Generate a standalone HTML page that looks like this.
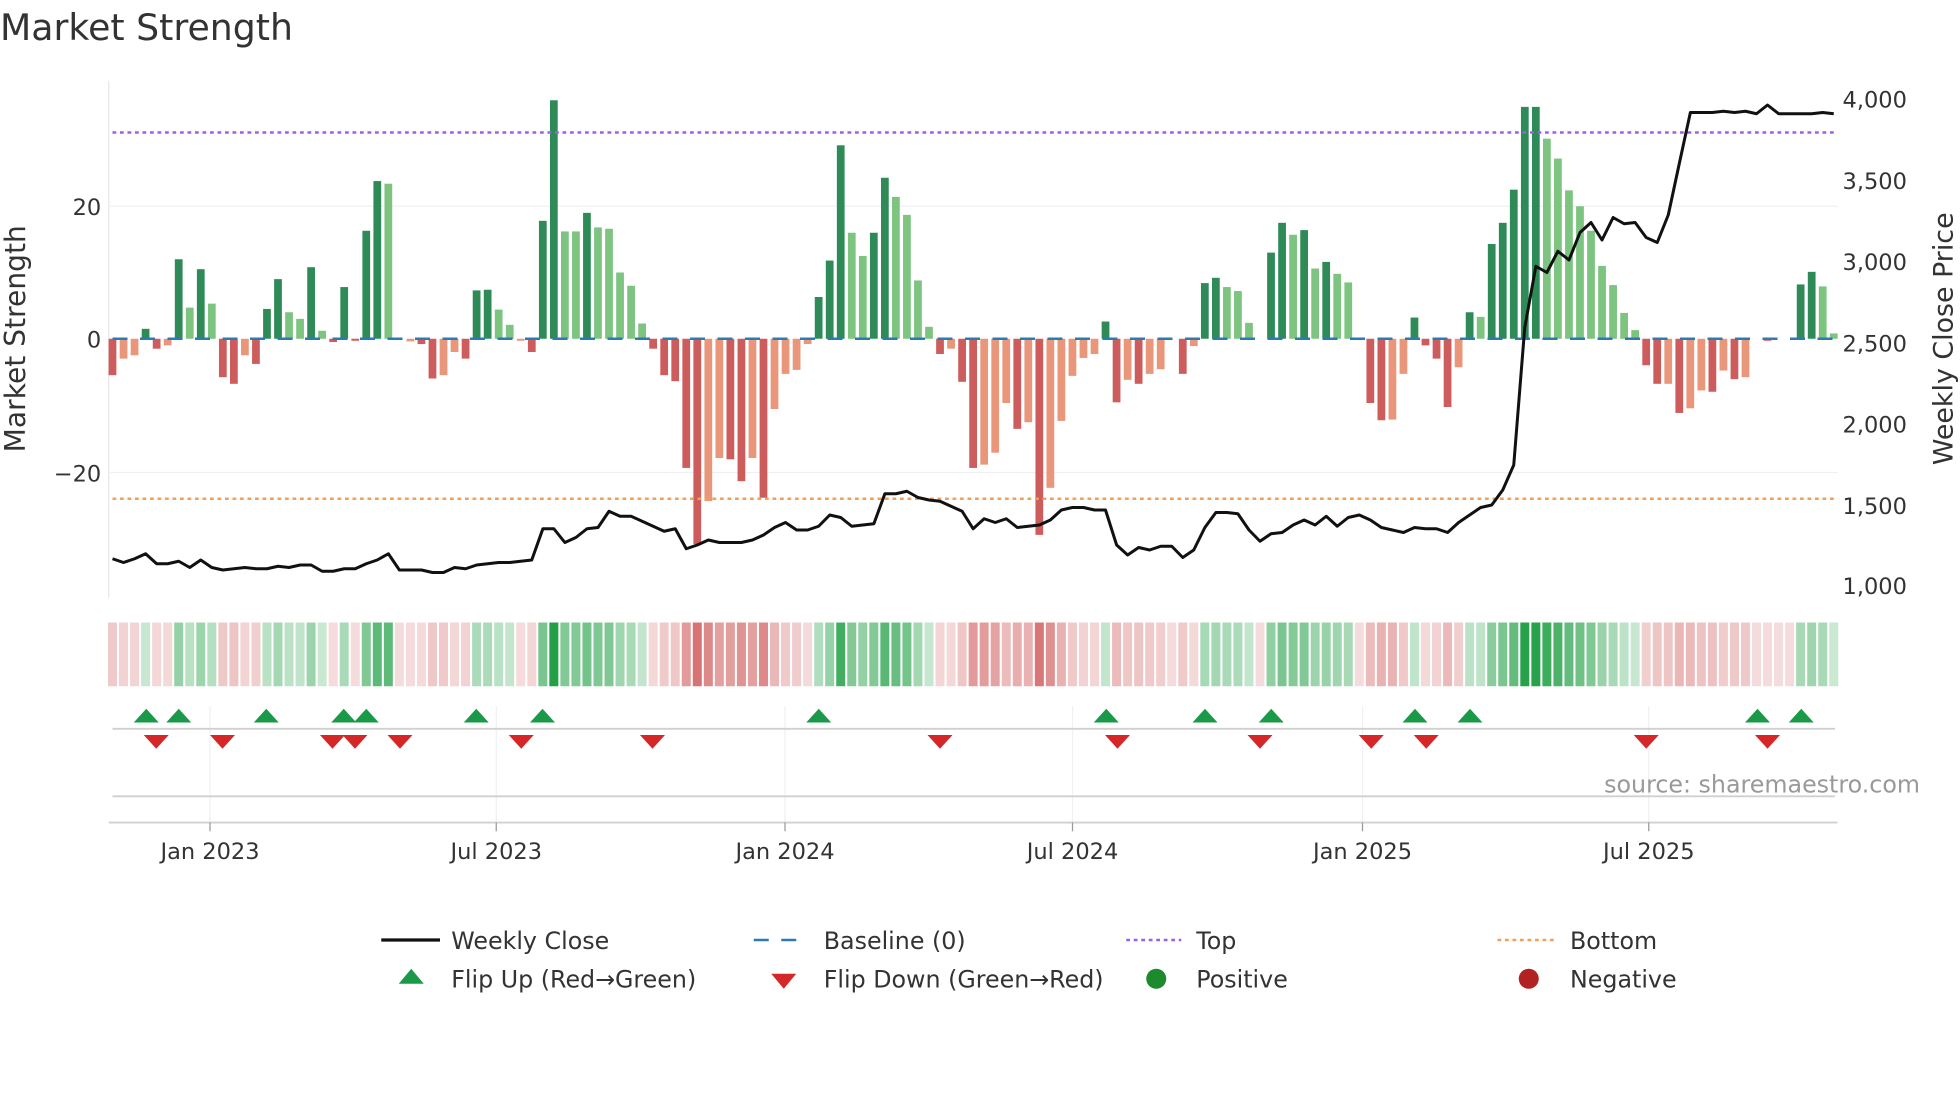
<!DOCTYPE html>
<html><head><meta charset="utf-8">
<style>
html,body{margin:0;padding:0;background:#fff;}
svg{display:block;font-family:"DejaVu Sans","Liberation Sans",sans-serif;}
</style></head>
<body>
<svg id="c" width="1960" height="1102" viewBox="0 0 1568 881.6" xmlns="http://www.w3.org/2000/svg">
<rect width="1568" height="882" fill="#fff"/>
<text x="0" y="32" font-size="29" fill="#333">Market Strength</text>
<line x1="87" y1="65" x2="87" y2="478" stroke="#e6e6e6" stroke-width="1"/>
<line x1="88" y1="165" x2="1470" y2="165" stroke="#eef0f4" stroke-width="1"/>
<line x1="88" y1="378" x2="1470" y2="378" stroke="#eef0f4" stroke-width="1"/>
<text x="81" y="172" font-size="18" fill="#333" text-anchor="end">20</text>
<text x="81" y="278" font-size="18" fill="#333" text-anchor="end">0</text>
<text x="81" y="385" font-size="18" fill="#333" text-anchor="end">−20</text>
<text transform="translate(20,271) rotate(-90)" font-size="22.5" fill="#333" text-anchor="middle">Market Strength</text>
<text transform="translate(1562,271) rotate(-90)" font-size="21.5" fill="#333" text-anchor="middle">Weekly Close Price</text>
<g font-size="18" fill="#333">
<text x="1474" y="86">4,000</text><text x="1474" y="151">3,500</text><text x="1474" y="216">3,000</text>
<text x="1474" y="281">2,500</text><text x="1474" y="346">2,000</text><text x="1474" y="411">1,500</text><text x="1474" y="475">1,000</text>
</g>
<g id="bars"></g>
<line x1="90" y1="271" x2="1468" y2="271" stroke="#2a7bb4" stroke-width="2" stroke-dasharray="12 10"/>
<line x1="90" y1="106" x2="1468" y2="106" stroke="#a05ee0" stroke-width="2" stroke-dasharray="3 3"/>
<line x1="90" y1="399" x2="1468" y2="399" stroke="#f0a05a" stroke-width="2" stroke-dasharray="3 3"/>
<polyline id="price" fill="none" stroke="#111" stroke-width="2.4" stroke-linejoin="round"/>
<g id="heat"></g>
<g stroke="#eef0f4" stroke-width="1">
<line x1="168" y1="565" x2="168" y2="658"/><line x1="397" y1="565" x2="397" y2="658"/><line x1="628" y1="565" x2="628" y2="658"/>
<line x1="858" y1="565" x2="858" y2="658"/><line x1="1090" y1="565" x2="1090" y2="658"/><line x1="1319" y1="565" x2="1319" y2="658"/>
</g>
<line x1="90" y1="583" x2="1468" y2="583" stroke="#d0d0d0" stroke-width="1.5"/>
<line x1="90" y1="637" x2="1468" y2="637" stroke="#d0d0d0" stroke-width="1.5"/>
<line x1="87" y1="658" x2="1470" y2="658" stroke="#d0d0d0" stroke-width="1.5"/>
<g stroke="#999" stroke-width="1">
<line x1="168" y1="658" x2="168" y2="665"/><line x1="397" y1="658" x2="397" y2="665"/><line x1="628" y1="658" x2="628" y2="665"/>
<line x1="858" y1="658" x2="858" y2="665"/><line x1="1090" y1="658" x2="1090" y2="665"/><line x1="1319" y1="658" x2="1319" y2="665"/>
</g>
<g id="flips"></g>
<text x="1536" y="634" font-size="19" fill="#999" text-anchor="end">source: sharemaestro.com</text>
<g font-size="18" fill="#333" text-anchor="middle">
<text x="168" y="687">Jan 2023</text><text x="397" y="687">Jul 2023</text><text x="628" y="687">Jan 2024</text>
<text x="858" y="687">Jul 2024</text><text x="1090" y="687">Jan 2025</text><text x="1319" y="687">Jul 2025</text>
</g>
<g font-size="19" fill="#333">
<line x1="305" y1="752" x2="352" y2="752" stroke="#111" stroke-width="2.6"/>
<text x="361" y="759">Weekly Close</text>
<line x1="603" y1="752" x2="647" y2="752" stroke="#2a7bb4" stroke-width="2" stroke-dasharray="12 10"/>
<text x="659" y="759">Baseline (0)</text>
<line x1="901" y1="752" x2="945" y2="752" stroke="#a05ee0" stroke-width="2" stroke-dasharray="3 3"/>
<text x="957" y="759">Top</text>
<line x1="1198" y1="752" x2="1243" y2="752" stroke="#f0a05a" stroke-width="2" stroke-dasharray="3 3"/>
<text x="1256" y="759">Bottom</text>
<polygon points="329,775 319,787 339,787" fill="#1a9a48"/>
<text x="361" y="790">Flip Up (Red→Green)</text>
<polygon points="617,779 637,779 627,791" fill="#d62728"/>
<text x="659" y="790">Flip Down (Green→Red)</text>
<circle cx="925" cy="783" r="8" fill="#1e8a2e"/>
<text x="957" y="790">Positive</text>
<circle cx="1223" cy="783" r="8" fill="#b22222"/>
<text x="1256" y="790">Negative</text>
</g>
</svg>
<script>
var NS="http://www.w3.org/2000/svg";
var B=[[-5.5,'r'],[-3,'l'],[-2.5,'l'],[1.5,'g'],[-1.5,'r'],[-1,'l'],[12,'g'],[4.7,'h'],[10.5,'g'],[5.3,'h'],[-5.8,'r'],[-6.8,'r'],[-2.5,'l'],[-3.8,'r'],[4.5,'g'],[9,'g'],[4,'h'],[3,'h'],[10.8,'g'],[1.2,'h'],[-0.5,'r'],[7.8,'g'],[-0.3,'r'],[16.3,'g'],[23.8,'g'],[23.4,'h'],[0,'l'],[-0.4,'l'],[-0.8,'r'],[-6,'r'],[-5.5,'l'],[-2,'l'],[-3,'r'],[7.3,'g'],[7.4,'g'],[4.4,'h'],[2.1,'h'],[-0.3,'l'],[-2,'r'],[17.8,'g'],[36,'g'],[16.2,'h'],[16.2,'h'],[19,'g'],[16.8,'h'],[16.6,'h'],[10,'h'],[8,'h'],[2.3,'h'],[-1.5,'r'],[-5.5,'r'],[-6.4,'r'],[-19.5,'r'],[-31,'r'],[-24.5,'l'],[-18,'l'],[-18.2,'r'],[-21.5,'r'],[-18,'l'],[-24,'r'],[-10.6,'l'],[-5.3,'l'],[-4.7,'l'],[-0.8,'l'],[6.3,'g'],[11.8,'g'],[29.2,'g'],[16,'h'],[12.5,'h'],[16,'g'],[24.3,'g'],[21.4,'h'],[18.7,'h'],[8.8,'h'],[1.8,'h'],[-2.3,'r'],[-1.5,'l'],[-6.5,'r'],[-19.5,'r'],[-19,'l'],[-17.2,'l'],[-9.7,'l'],[-13.6,'r'],[-12.6,'l'],[-29.6,'r'],[-22.5,'l'],[-12.4,'l'],[-5.6,'l'],[-2.9,'l'],[-2.3,'l'],[2.6,'g'],[-9.6,'r'],[-6.2,'l'],[-6.8,'r'],[-5.3,'l'],[-4.6,'l'],[0,'l'],[-5.3,'r'],[-1.1,'l'],[8.4,'g'],[9.2,'g'],[7.8,'h'],[7.2,'h'],[2.4,'h'],[0,'h'],[13,'g'],[17.5,'g'],[15.7,'h'],[16.4,'g'],[10.6,'h'],[11.6,'g'],[9.8,'h'],[8.5,'h'],[0,'l'],[-9.7,'r'],[-12.3,'r'],[-12.2,'l'],[-5.3,'l'],[3.2,'g'],[-1,'r'],[-3,'r'],[-10.3,'r'],[-4.3,'l'],[4,'g'],[3.3,'h'],[14.3,'g'],[17.5,'g'],[22.5,'g'],[35,'g'],[35,'g'],[30.2,'h'],[27.2,'h'],[22.4,'h'],[20,'h'],[16.3,'h'],[11,'h'],[8.1,'h'],[3.9,'h'],[1.3,'h'],[-4,'r'],[-6.8,'r'],[-6.8,'l'],[-11.2,'r'],[-10.5,'l'],[-7.8,'l'],[-8,'r'],[-4.8,'l'],[-6.1,'r'],[-5.8,'l'],[0,'l'],[-0.3,'r'],[0,'l'],[0,'l'],[8.2,'g'],[10.1,'g'],[7.9,'h'],[0.8,'h']];
var P=[447,450,447,443,451,451,449,454,448,454,456,455,454,455,455,453,454,452,452,457,457,455,455,451,448,443,456,456,456,458,458,454,455,452,451,450,450,449,448,423,423,434,430,423,422,409,413,413,417,421,425,423,439,436,432,434,434,434,432,428,422,418,424,424,421,412,414,421,420,419,395,395,393,398,400,401,405,409,423,415,418,415,422,421,420,416,408,406,406,408,408,436,444,438,440,437,437,446,440,422,410,410,411,424,433,427,426,420,416,420,413,421,414,412,416,422,424,426,422,423,423,426,418,412,406,404,392,372,262,213,218,201,208,186,178,192,174,179,178,190,194,172,131,90,90,90,89,90,89,91,84,91,91,91,91,90,91];
var n=B.length, x0=90, x1=1467, dx=(x1-x0)/(n-1);
var col={g:'#2e8b57',h:'#7cc47f',r:'#cd5c5c',l:'#e9967a'};
var bars=document.getElementById('bars'), heat=document.getElementById('heat');
function mix(c,a){var w=[255,255,255];return 'rgb('+c.map(function(v,i){return Math.round(w[i]+(v-w[i])*a)}).join(',')+')';}
for(var i=0;i<n;i++){
 var v=B[i][0], x=x0+i*dx, h=Math.abs(v)*5.3;
 if(h>0.3){var r=document.createElementNS(NS,'rect');r.setAttribute('x',x-3.1);r.setAttribute('width',6.2);
 r.setAttribute('y',v>0?271-h:271);r.setAttribute('height',h);r.setAttribute('fill',col[B[i][1]]);bars.appendChild(r);}
 var a=0.22+Math.min(Math.abs(v)/36,1)*0.78;
 var c=v>0?mix([34,160,70],a):mix([205,80,80],a*0.9);
 var q=document.createElementNS(NS,'rect');q.setAttribute('x',x-3.6);q.setAttribute('width',7.2);q.setAttribute('y',498);q.setAttribute('height',51);q.setAttribute('fill',c);heat.appendChild(q);
}
var pts=[];var pn=P.length,pdx=(x1-x0)/(pn-1);
for(var j=0;j<pn;j++)pts.push((x0+j*pdx).toFixed(1)+','+P[j]);
document.getElementById('price').setAttribute('points',pts.join(' '));
var up=[117,143,213,275,293,381,434,655,885,964,1017,1132,1176,1406,1441];
var dn=[125,178,266,284,320,417,522,752,894,1008,1097,1141,1317,1414];
var f=document.getElementById('flips');
up.forEach(function(x){var p=document.createElementNS(NS,'polygon');p.setAttribute('points',x+',567 '+(x-10)+',578 '+(x+10)+',578');p.setAttribute('fill','#1a9a48');f.appendChild(p);});
dn.forEach(function(x){var p=document.createElementNS(NS,'polygon');p.setAttribute('points',(x-10)+',588 '+(x+10)+',588 '+x+',599');p.setAttribute('fill','#d62728');f.appendChild(p);});
</script>
</body></html>
